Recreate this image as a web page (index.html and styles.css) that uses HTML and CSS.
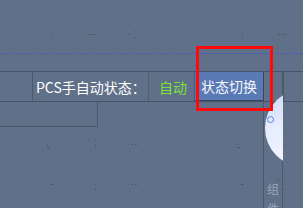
FILE: index.html
```html
<!DOCTYPE html>
<html>
<head>
<meta charset="utf-8">
<link rel="stylesheet" href="styles.css">
</head>
<body>
<div class="stage">
  <svg class="ticks" width="303" height="208" viewBox="0 0 303 208">
    <g fill="#4c596b">
      <rect x="51" y="30" width="1" height="1"/><rect x="51" y="34" width="1" height="1"/><rect x="51" y="37" width="1" height="1"/>
      <rect x="88" y="34" width="2" height="1"/><rect x="91" y="34" width="2" height="1"/><rect x="94" y="34" width="2" height="1"/>
      <rect x="128" y="34" width="2" height="1"/><rect x="135" y="31" width="1" height="1"/><rect x="135" y="37" width="1" height="1"/>
      <rect x="242" y="30" width="1" height="1"/><rect x="242" y="34" width="1" height="1"/><rect x="242" y="37" width="1" height="1"/>
      <rect x="278" y="34" width="2" height="1"/><rect x="281" y="34" width="2" height="1"/><rect x="284" y="34" width="2" height="1"/>
      <rect x="47" y="140" width="1" height="1"/><rect x="47" y="144" width="1" height="1"/><rect x="47" y="147" width="3" height="1"/>
      <rect x="87" y="140" width="2" height="1"/><rect x="95" y="140" width="1" height="1"/><rect x="95" y="144" width="1" height="1"/><rect x="95" y="147" width="1" height="1"/>
      <rect x="131" y="144" width="2" height="1"/><rect x="135" y="144" width="2" height="1"/>
      <rect x="237" y="140" width="1" height="1"/><rect x="237" y="144" width="1" height="1"/><rect x="237" y="147" width="3" height="1"/>
      <rect x="277" y="140" width="2" height="1"/><rect x="285" y="140" width="1" height="1"/><rect x="285" y="144" width="1" height="1"/>
      <rect x="47" y="180" width="1" height="1"/><rect x="51" y="184" width="3" height="1"/><rect x="47" y="188" width="1" height="1"/>
      <rect x="87" y="180" width="2" height="1"/><rect x="95" y="184" width="1" height="1"/><rect x="95" y="188" width="1" height="1"/>
      <rect x="131" y="184" width="2" height="1"/><rect x="135" y="184" width="2" height="1"/>
      <rect x="237" y="180" width="1" height="1"/><rect x="241" y="184" width="3" height="1"/><rect x="237" y="188" width="1" height="1"/>
      <rect x="277" y="180" width="2" height="1"/><rect x="285" y="184" width="1" height="1"/><rect x="285" y="188" width="1" height="1"/>
    </g>
  </svg>

  <div class="top"></div>
  <div class="dash"></div>
  <div class="spacer"></div>

  <div class="row">
    <div class="cell c0"></div>
    <div class="cell c1">PCS手自动状态：</div>
    <div class="cell c2">自动</div>
    <div class="cell btn">状态切换</div>
    <div class="cell c4"></div>
    <div class="cell c5"></div>
  </div>

  <div class="lower">
    <div class="leftbox"></div>
    <div class="fill"></div>
    <div class="panel">
      <div class="label">组件</div>
    </div>
    <div class="tail"></div>
  </div>

  <div class="moonclip">
    <div class="moon"></div>
    <div class="ring"></div>
  </div>

  <div class="highlight"></div>
</div>
</body>
</html>
```

FILE: styles.css
```css
html, body {
  margin: 0;
  padding: 0;
  background: #5f7088;
}

.stage {
  position: relative;
  width: 303px;
  height: 208px;
  overflow: hidden;
  background: #5f7088;
  font-family: "Noto Sans CJK SC", "Noto Sans", sans-serif;
}

.ticks {
  position: absolute;
  left: 0;
  top: 0;
}

.top {
  height: 53px;
}

.dash {
  height: 0;
  border-top: 1px dashed #4a5bc8;
}

.spacer {
  height: 17px;
}

.row {
  display: flex;
  height: 29px;
  border-top: 1px solid #46536a;
  border-bottom: 1px solid #46536a;
}

.cell {
  box-sizing: border-box;
  height: 29px;
  display: flex;
  align-items: center;
  font-size: 14px;
  font-weight: 400;
  line-height: 1;
  white-space: nowrap;
  border-right: 1px solid #4b586d;
}

.c0 {
  width: 33px;
}

.c1 {
  width: 116px;
  padding-left: 3px;
  color: #ffffff;
  border-right-color: #525f73;
}

.c2 {
  width: 46px;
  padding-left: 10px;
  color: #7de13a;
}

.btn {
  width: 69px;
  padding-left: 6px;
  color: #f4f6fb;
  background: #5a7ab6;
  border-right: 1px solid #3a4558;
  border-bottom: 1px solid #3a4558;
}

.c4 {
  width: 19px;
}

.c5 {
  flex: 1;
  border-right: none;
  border-left: 1px solid #4b586d;
}

.lower {
  display: flex;
  height: 107px;
}

.leftbox {
  box-sizing: border-box;
  width: 98px;
  height: 25px;
  border-right: 1px solid #4b586d;
  border-bottom: 1px solid #4b586d;
}

.fill {
  flex: 1;
}

.panel {
  box-sizing: border-box;
  width: 20px;
  border-left: 1px solid #4b586d;
  border-right: 1px solid #4b586d;
  overflow: hidden;
  padding-top: 77px;
  padding-left: 3px;
}

.label {
  width: 12px;
  font-size: 12px;
  line-height: 20px;
  color: #9aa5b6;
}

.tail {
  width: 20px;
}

.moonclip {
  position: absolute;
  left: 265px;
  top: 72px;
  width: 18px;
  height: 136px;
  overflow: hidden;
}

.moon {
  position: absolute;
  left: 0;
  top: 17px;
  width: 78px;
  height: 78px;
  border-radius: 50%;
  background: linear-gradient(160deg, #c9d6f7 0%, #e6edfd 40%, #f6f8ff 100%);
}

.ring {
  position: absolute;
  left: 2px;
  top: 44px;
  width: 5px;
  height: 5px;
  border: 1.5px solid #5b82e2;
  border-radius: 50%;
}

.highlight {
  position: absolute;
  left: 196px;
  top: 46px;
  width: 71px;
  height: 59px;
  border: 3px solid #ff0a0a;
}
```
